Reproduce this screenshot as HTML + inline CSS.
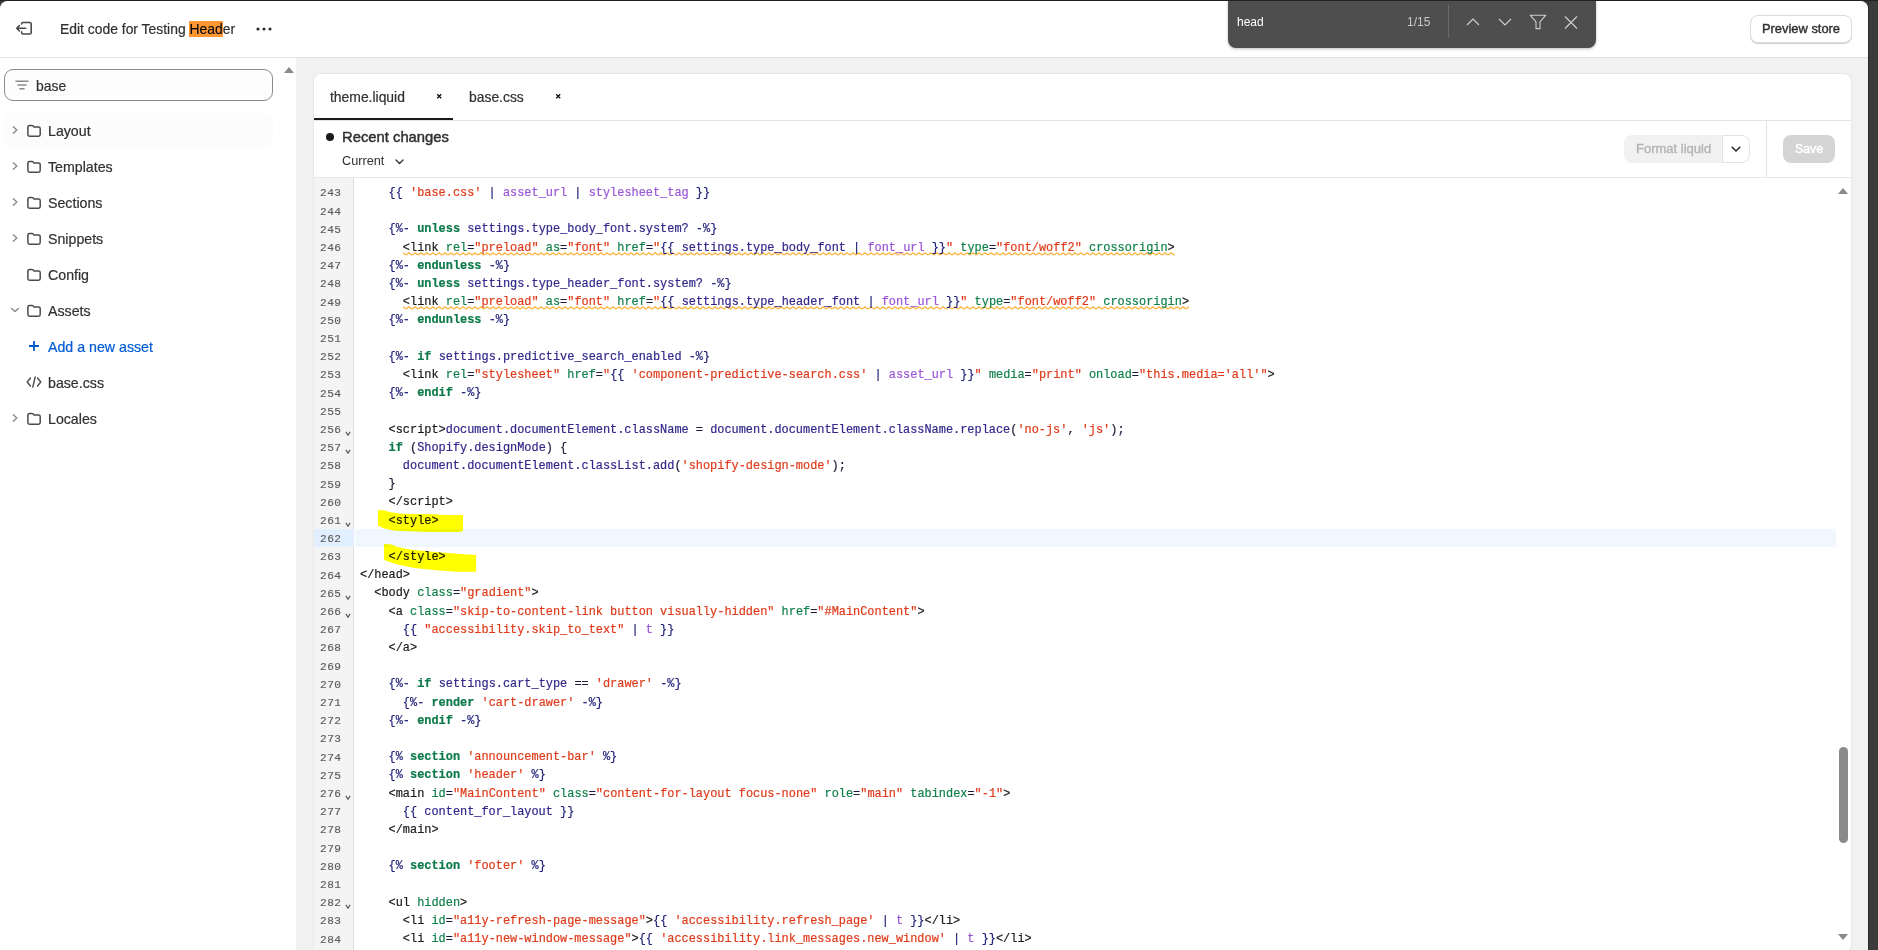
<!DOCTYPE html>
<html><head><meta charset="utf-8">
<style>
*{box-sizing:border-box;margin:0;padding:0}
html,body{width:1878px;height:950px;overflow:hidden}
body{background:#3b3b3b;position:relative;font-family:"Liberation Sans",sans-serif;color:#303030}
.topstrip{position:absolute;left:0;top:0;width:1878px;height:1px;background:#222}
.app{position:absolute;left:0;top:1px;width:1868px;height:949px;background:#f1f1f1;border-radius:8px 8px 0 0;overflow:hidden}
.rline{position:absolute;left:1868px;top:0;width:1px;height:950px;background:#2b2b2b}
.hdr{position:absolute;left:0;top:0;width:1868px;height:58px;background:#fff;border-bottom:1px solid #e3e3e3}
.side{position:absolute;left:0;top:58px;width:296px;height:892px;background:#fff}
.card{position:absolute;left:314px;top:74px;width:1537px;height:878px;background:#fff;border-radius:7px;overflow:hidden;box-shadow:0 0 0 1px #e8e8e8}
.abs{position:absolute}
.title{position:absolute;left:60px;top:20.1px;font-size:13.9px;line-height:18px;color:#303030;white-space:nowrap;-webkit-text-stroke:0.2px #303030}
.hl{background:#ff9632;color:#000}
.dots{position:absolute;left:256px;top:26px}
.preview{position:absolute;left:1750px;top:15px;width:102px;height:28px;border:1px solid #dcdcdc;border-radius:8px;box-shadow:0 1px 0 #d0d0d0;font-size:12.9px;font-weight:400;-webkit-text-stroke:0.4px #303030;line-height:26px;text-align:center;color:#303030;background:#fff;white-space:nowrap}
.find{position:absolute;left:1228px;top:0;width:368px;height:48px;background:#4e4e4e;border-radius:0 0 8px 8px;box-shadow:0 1px 3px rgba(0,0,0,.25)}
.search{position:absolute;left:4px;top:11px;width:269px;height:32px;border:1px solid #8a8a8a;border-radius:9px;background:#fdfdfd}
.row{position:absolute;left:4px;width:269px;height:32px;border-radius:8px}
.rtxt{position:absolute;left:44px;top:7px;font-size:14.2px;line-height:18px;color:#303030;white-space:nowrap;-webkit-text-stroke:0.2px currentColor}
.tab{position:absolute;font-size:13.9px;line-height:18px;color:#303030;white-space:nowrap;-webkit-text-stroke:0.2px #303030}
.gut{position:absolute;left:0;top:104px;width:40px;height:800px;background:#f4f4f4;border-right:1px solid #dedede}
.code{position:absolute;left:46px;top:104px;width:1491px;height:800px}
.ln{position:absolute;height:18px;line-height:18px;white-space:pre;font-family:"Liberation Mono",monospace;font-size:11.91px;color:#1f1f1f;-webkit-text-stroke:0.2px currentColor}
.gn{position:absolute;left:0;width:27.5px;text-align:right;height:18px;line-height:18px;font-family:"Liberation Mono",monospace;font-size:11.2px;letter-spacing:0.425px;color:#5c5c5c;padding-top:0.4px;-webkit-text-stroke:0.15px #5c5c5c}
.fold{position:absolute;left:31.3px;height:18px}
.fold svg{position:absolute;top:10.6px;left:0}
i{font-style:normal}
.p{color:#1e1e78}.k{color:#0c7a4a;font-weight:700}.v{color:#33288a}.s{color:#e03a1a}.f{color:#9a56d8}.t{color:#1a1a1a}.a{color:#0f7f4a}.o{color:#1c1c3c}.w{}
.sq{text-decoration:underline wavy #f6b445;text-decoration-thickness:1.4px;text-underline-offset:2px;text-decoration-skip-ink:none}
</style></head>
<body>
<div class="app"><div style="position:absolute;left:0;top:-1px;width:1868px;height:950px">
  <div class="hdr">
    <svg class="abs" style="left:15px;top:20px" width="18" height="16" viewBox="0 0 18 16">
      <path d="M6.6 4 V3.9 Q6.6 2.5 8 2.5 H14.6 Q16.2 2.5 16.2 4.1 V12.4 Q16.2 14 14.6 14 H8 Q6.6 14 6.6 12.6 V11.7" fill="none" stroke="#4a4a4a" stroke-width="1.6" stroke-linecap="round"/>
      <path d="M10.6 8.25 H1.8 M4.4 5.6 L1.7 8.25 L4.4 10.9" fill="none" stroke="#4a4a4a" stroke-width="1.6" stroke-linecap="round" stroke-linejoin="round"/>
    </svg>
    <div class="title">Edit code for Testing <span class="hl">Head</span>er</div>
    <svg class="dots" width="16" height="6" viewBox="0 0 16 6"><circle cx="2" cy="3" r="1.6" fill="#303030"/><circle cx="8" cy="3" r="1.6" fill="#303030"/><circle cx="14" cy="3" r="1.6" fill="#303030"/></svg>
    <div class="preview">Preview store</div>
  </div>
  <div class="side">
    <div class="search">
      <svg class="abs" style="left:10px;top:9.5px" width="14" height="10" viewBox="0 0 14 10"><path d="M1 1.2 H13 M3 5 H11 M5 8.8 H9" stroke="#8a8a8a" stroke-width="1.5" stroke-linecap="round"/></svg>
      <div class="abs" style="left:31px;top:7px;font-size:13.9px;line-height:18px;color:#303030;-webkit-text-stroke:0.2px #303030">base</div>
    </div>
    <svg class="abs" style="left:284px;top:9px" width="10" height="6" viewBox="0 0 10 6"><path d="M0 6 L5 0 L10 6Z" fill="#8a8a8a"/></svg>
    <div class="abs" style="left:0;top:57.30px;width:296px;height:32px"><div class="abs" style="left:4px;top:-2px;width:269px;height:34px;border-radius:8px;background:#fcfcfc"></div><svg class="abs" style="left:10px;top:10px" width="10" height="10" viewBox="0 0 10 10"><path d="M3.4 1.7 L6.8 5 L3.4 8.3" fill="none" stroke="#8a8a8a" stroke-width="1.4" stroke-linecap="round" stroke-linejoin="round"/></svg><svg class="abs" style="left:26px;top:9px" width="16" height="14" viewBox="0 0 16 14"><path d="M1.9 3 Q1.9 1.4 3.5 1.4 H5.8 Q6.6 1.4 7.2 2.1 L8 3 H12.6 Q14.2 3 14.2 4.6 V10.6 Q14.2 12.2 12.6 12.2 H3.5 Q1.9 12.2 1.9 10.6 Z" fill="none" stroke="#4a4a4a" stroke-width="1.5" stroke-linejoin="round"/></svg><div class="rtxt" style="left:48px;top:7px;color:#303030">Layout</div></div>
<div class="abs" style="left:0;top:93.30px;width:296px;height:32px"><svg class="abs" style="left:10px;top:10px" width="10" height="10" viewBox="0 0 10 10"><path d="M3.4 1.7 L6.8 5 L3.4 8.3" fill="none" stroke="#8a8a8a" stroke-width="1.4" stroke-linecap="round" stroke-linejoin="round"/></svg><svg class="abs" style="left:26px;top:9px" width="16" height="14" viewBox="0 0 16 14"><path d="M1.9 3 Q1.9 1.4 3.5 1.4 H5.8 Q6.6 1.4 7.2 2.1 L8 3 H12.6 Q14.2 3 14.2 4.6 V10.6 Q14.2 12.2 12.6 12.2 H3.5 Q1.9 12.2 1.9 10.6 Z" fill="none" stroke="#4a4a4a" stroke-width="1.5" stroke-linejoin="round"/></svg><div class="rtxt" style="left:48px;top:7px;color:#303030">Templates</div></div>
<div class="abs" style="left:0;top:129.30px;width:296px;height:32px"><svg class="abs" style="left:10px;top:10px" width="10" height="10" viewBox="0 0 10 10"><path d="M3.4 1.7 L6.8 5 L3.4 8.3" fill="none" stroke="#8a8a8a" stroke-width="1.4" stroke-linecap="round" stroke-linejoin="round"/></svg><svg class="abs" style="left:26px;top:9px" width="16" height="14" viewBox="0 0 16 14"><path d="M1.9 3 Q1.9 1.4 3.5 1.4 H5.8 Q6.6 1.4 7.2 2.1 L8 3 H12.6 Q14.2 3 14.2 4.6 V10.6 Q14.2 12.2 12.6 12.2 H3.5 Q1.9 12.2 1.9 10.6 Z" fill="none" stroke="#4a4a4a" stroke-width="1.5" stroke-linejoin="round"/></svg><div class="rtxt" style="left:48px;top:7px;color:#303030">Sections</div></div>
<div class="abs" style="left:0;top:165.30px;width:296px;height:32px"><svg class="abs" style="left:10px;top:10px" width="10" height="10" viewBox="0 0 10 10"><path d="M3.4 1.7 L6.8 5 L3.4 8.3" fill="none" stroke="#8a8a8a" stroke-width="1.4" stroke-linecap="round" stroke-linejoin="round"/></svg><svg class="abs" style="left:26px;top:9px" width="16" height="14" viewBox="0 0 16 14"><path d="M1.9 3 Q1.9 1.4 3.5 1.4 H5.8 Q6.6 1.4 7.2 2.1 L8 3 H12.6 Q14.2 3 14.2 4.6 V10.6 Q14.2 12.2 12.6 12.2 H3.5 Q1.9 12.2 1.9 10.6 Z" fill="none" stroke="#4a4a4a" stroke-width="1.5" stroke-linejoin="round"/></svg><div class="rtxt" style="left:48px;top:7px;color:#303030">Snippets</div></div>
<div class="abs" style="left:0;top:201.30px;width:296px;height:32px"><svg class="abs" style="left:26px;top:9px" width="16" height="14" viewBox="0 0 16 14"><path d="M1.9 3 Q1.9 1.4 3.5 1.4 H5.8 Q6.6 1.4 7.2 2.1 L8 3 H12.6 Q14.2 3 14.2 4.6 V10.6 Q14.2 12.2 12.6 12.2 H3.5 Q1.9 12.2 1.9 10.6 Z" fill="none" stroke="#4a4a4a" stroke-width="1.5" stroke-linejoin="round"/></svg><div class="rtxt" style="left:48px;top:7px;color:#303030">Config</div></div>
<div class="abs" style="left:0;top:237.30px;width:296px;height:32px"><svg class="abs" style="left:10px;top:10px" width="10" height="10" viewBox="0 0 10 10"><path d="M1.6 3.4 L5 6.6 L8.4 3.4" fill="none" stroke="#8a8a8a" stroke-width="1.4" stroke-linecap="round" stroke-linejoin="round"/></svg><svg class="abs" style="left:26px;top:9px" width="16" height="14" viewBox="0 0 16 14"><path d="M1.9 3 Q1.9 1.4 3.5 1.4 H5.8 Q6.6 1.4 7.2 2.1 L8 3 H12.6 Q14.2 3 14.2 4.6 V10.6 Q14.2 12.2 12.6 12.2 H3.5 Q1.9 12.2 1.9 10.6 Z" fill="none" stroke="#4a4a4a" stroke-width="1.5" stroke-linejoin="round"/></svg><div class="rtxt" style="left:48px;top:7px;color:#303030">Assets</div></div>
<div class="abs" style="left:0;top:273.30px;width:296px;height:32px"><svg class="abs" style="left:28.1px;top:8.7px" width="12" height="12" viewBox="0 0 12 12"><path d="M6 1 V11 M1 6 H11" stroke="#005bd3" stroke-width="1.8"/></svg><div class="rtxt" style="left:48px;top:7px;color:#005bd3">Add a new asset</div></div>
<div class="abs" style="left:0;top:309.30px;width:296px;height:32px"><svg class="abs" style="left:26px;top:9px" width="16" height="12" viewBox="0 0 16 12"><path d="M4.5 2 L1.2 6 L4.5 10 M11.5 2 L14.8 6 L11.5 10 M9.2 1 L6.8 11" fill="none" stroke="#4a4a4a" stroke-width="1.4" stroke-linecap="round" stroke-linejoin="round"/></svg><div class="rtxt" style="left:48px;top:7px;color:#303030">base.css</div></div>
<div class="abs" style="left:0;top:345.30px;width:296px;height:32px"><svg class="abs" style="left:10px;top:10px" width="10" height="10" viewBox="0 0 10 10"><path d="M3.4 1.7 L6.8 5 L3.4 8.3" fill="none" stroke="#8a8a8a" stroke-width="1.4" stroke-linecap="round" stroke-linejoin="round"/></svg><svg class="abs" style="left:26px;top:9px" width="16" height="14" viewBox="0 0 16 14"><path d="M1.9 3 Q1.9 1.4 3.5 1.4 H5.8 Q6.6 1.4 7.2 2.1 L8 3 H12.6 Q14.2 3 14.2 4.6 V10.6 Q14.2 12.2 12.6 12.2 H3.5 Q1.9 12.2 1.9 10.6 Z" fill="none" stroke="#4a4a4a" stroke-width="1.5" stroke-linejoin="round"/></svg><div class="rtxt" style="left:48px;top:7px;color:#303030">Locales</div></div>
  </div>
  <div class="card">
    <div class="tab" style="left:16px;top:14.2px">theme.liquid</div>
    <svg class="abs" style="left:121.8px;top:18.8px" width="7" height="7" viewBox="0 0 7 7"><path d="M1.2 1.2 L5.2 5.2 M5.2 1.2 L1.2 5.2" stroke="#111" stroke-width="1.35"/></svg>
    <div class="tab" style="left:155px;top:14.2px">base.css</div>
    <svg class="abs" style="left:240.8px;top:18.8px" width="7" height="7" viewBox="0 0 7 7"><path d="M1.2 1.2 L5.2 5.2 M5.2 1.2 L1.2 5.2" stroke="#111" stroke-width="1.35"/></svg>
    <div class="abs" style="left:0;top:44px;width:139px;height:2px;background:#1a1a1a"></div>
    <div class="abs" style="left:0;top:46px;width:1537px;height:1px;background:#e3e3e3"></div>
    <div class="abs" style="left:12px;top:59px;width:8px;height:8px;border-radius:50%;background:#1a1a1a"></div>
    <div class="abs" style="left:28px;top:53.8px;font-size:14.8px;line-height:18px;font-weight:400;-webkit-text-stroke:0.45px #303030;color:#303030;white-space:nowrap">Recent changes</div>
    <div class="abs" style="left:28px;top:79px;font-size:12.7px;line-height:16px;color:#303030">Current</div>
    <svg class="abs" style="left:81px;top:85px" width="9" height="6" viewBox="0 0 9 6"><path d="M1 1 L4.5 4.5 L8 1" fill="none" stroke="#303030" stroke-width="1.4" stroke-linecap="round" stroke-linejoin="round"/></svg>
    <div class="abs" style="left:1310px;top:61px;width:126px;height:28px;border-radius:8px;background:#f1f1f1;overflow:hidden">
      <div class="abs" style="left:12px;top:6px;font-size:13px;line-height:16px;color:#b3b3b3;-webkit-text-stroke:0.35px #b3b3b3;white-space:nowrap">Format liquid</div>
      <div class="abs" style="left:98px;top:0;width:28px;height:28px;background:#fff;border:1px solid #e3e3e3;border-radius:0 8px 8px 0"></div>
      <svg class="abs" style="left:107px;top:11px" width="10" height="7" viewBox="0 0 10 7"><path d="M1.2 1.2 L5 5 L8.8 1.2" fill="none" stroke="#303030" stroke-width="1.6" stroke-linecap="round" stroke-linejoin="round"/></svg>
    </div>
    <div class="abs" style="left:1452px;top:47px;width:1px;height:56px;background:#e3e3e3"></div>
    <div class="abs" style="left:1469px;top:61px;width:52px;height:28px;border-radius:8px;background:#d4d4d4;color:#fff;font-size:12.3px;font-weight:400;-webkit-text-stroke:0.45px #fff;line-height:28px;text-align:center">Save</div>
    <div class="abs" style="left:0;top:103px;width:1537px;height:1px;background:#e8e8e8"></div>
    <div class="gut"></div>
    <!-- highlight line 262 -->
    <div class="abs" id="hl262" style="left:0;top:455px;width:40px;height:18px;background:#e1efff"></div>
    <div class="abs" id="hl262b" style="left:41px;top:455px;width:1481px;height:18px;background:#f0f7ff"></div>
    <div class="abs" style="left:46.0px;top:0;width:1480px;height:900px" id="code"><div class="ln" style="top:110.00px;left:28.580px"><i class="p">{{ </i><i class="s">'base.css'</i><i class="p"> | </i><i class="f">asset_url</i><i class="p"> | </i><i class="f">stylesheet_tag</i><i class="p"> }}</i></div>
<div class="ln" style="top:128.20px;left:0.000px"></div>
<div class="ln" style="top:146.40px;left:28.580px"><i class="p">{%- </i><i class="k">unless</i><i class="w"> </i><i class="v">settings.type_body_font.system?</i><i class="p"> -%}</i></div>
<svg class="abs" style="left:42.870px;top:177.50px" width="771.7" height="4"><defs><pattern id="wv246" x="0" y="0" width="6" height="4" patternUnits="userSpaceOnUse"><path d="M-3 2.8 C-2 2.8 -1 1 0 1 C1 1 2 2.8 3 2.8 C4 2.8 5 1 6 1 C7 1 8 2.8 9 2.8" fill="none" stroke="#fdb543" stroke-width="1.3"/></pattern></defs><rect x="0" y="0" width="771.7" height="4" fill="url(#wv246)"/></svg>
<div class="ln" style="top:164.60px;left:42.870px"><i class="t">&lt;link </i><i class="a">rel</i><i class="o">=</i><i class="s">"preload"</i><i class="w"> </i><i class="a">as</i><i class="o">=</i><i class="s">"font"</i><i class="w"> </i><i class="a">href</i><i class="o">=</i><i class="s">"</i><i class="p">{{ </i><i class="v">settings.type_body_font</i><i class="p"> | </i><i class="f">font_url</i><i class="p"> }}</i><i class="s">"</i><i class="w"> </i><i class="a">type</i><i class="o">=</i><i class="s">"font/woff2"</i><i class="w"> </i><i class="a">crossorigin</i><i class="t">&gt;</i></div>
<div class="ln" style="top:182.80px;left:28.580px"><i class="p">{%- </i><i class="k">endunless</i><i class="p"> -%}</i></div>
<div class="ln" style="top:201.00px;left:28.580px"><i class="p">{%- </i><i class="k">unless</i><i class="w"> </i><i class="v">settings.type_header_font.system?</i><i class="p"> -%}</i></div>
<svg class="abs" style="left:42.870px;top:232.10px" width="785.9" height="4"><defs><pattern id="wv249" x="0" y="0" width="6" height="4" patternUnits="userSpaceOnUse"><path d="M-3 2.8 C-2 2.8 -1 1 0 1 C1 1 2 2.8 3 2.8 C4 2.8 5 1 6 1 C7 1 8 2.8 9 2.8" fill="none" stroke="#fdb543" stroke-width="1.3"/></pattern></defs><rect x="0" y="0" width="785.9" height="4" fill="url(#wv249)"/></svg>
<div class="ln" style="top:219.20px;left:42.870px"><i class="t">&lt;link </i><i class="a">rel</i><i class="o">=</i><i class="s">"preload"</i><i class="w"> </i><i class="a">as</i><i class="o">=</i><i class="s">"font"</i><i class="w"> </i><i class="a">href</i><i class="o">=</i><i class="s">"</i><i class="p">{{ </i><i class="v">settings.type_header_font</i><i class="p"> | </i><i class="f">font_url</i><i class="p"> }}</i><i class="s">"</i><i class="w"> </i><i class="a">type</i><i class="o">=</i><i class="s">"font/woff2"</i><i class="w"> </i><i class="a">crossorigin</i><i class="t">&gt;</i></div>
<div class="ln" style="top:237.40px;left:28.580px"><i class="p">{%- </i><i class="k">endunless</i><i class="p"> -%}</i></div>
<div class="ln" style="top:255.60px;left:0.000px"></div>
<div class="ln" style="top:273.80px;left:28.580px"><i class="p">{%- </i><i class="k">if</i><i class="w"> </i><i class="v">settings.predictive_search_enabled</i><i class="p"> -%}</i></div>
<div class="ln" style="top:292.00px;left:42.870px"><i class="t">&lt;link </i><i class="a">rel</i><i class="o">=</i><i class="s">"stylesheet"</i><i class="w"> </i><i class="a">href</i><i class="o">=</i><i class="s">"</i><i class="p">{{ </i><i class="s">'component-predictive-search.css'</i><i class="p"> | </i><i class="f">asset_url</i><i class="p"> }}</i><i class="s">"</i><i class="w"> </i><i class="a">media</i><i class="o">=</i><i class="s">"print"</i><i class="w"> </i><i class="a">onload</i><i class="o">=</i><i class="s">"this.media='all'"</i><i class="t">&gt;</i></div>
<div class="ln" style="top:310.20px;left:28.580px"><i class="p">{%- </i><i class="k">endif</i><i class="p"> -%}</i></div>
<div class="ln" style="top:328.40px;left:0.000px"></div>
<div class="ln" style="top:346.60px;left:28.580px"><i class="t">&lt;script&gt;</i><i class="v">document.documentElement.className</i><i class="o"> = </i><i class="v">document.documentElement.className.replace</i><i class="o">(</i><i class="s">'no-js'</i><i class="o">, </i><i class="s">'js'</i><i class="o">);</i></div>
<div class="ln" style="top:364.80px;left:28.580px"><i class="k">if</i><i class="o"> (</i><i class="v">Shopify.designMode</i><i class="o">) {</i></div>
<div class="ln" style="top:383.00px;left:42.870px"><i class="v">document.documentElement.classList.add</i><i class="o">(</i><i class="s">'shopify-design-mode'</i><i class="o">);</i></div>
<div class="ln" style="top:401.20px;left:28.580px"><i class="o">}</i></div>
<div class="ln" style="top:419.40px;left:28.580px"><i class="t">&lt;/script&gt;</i></div>
<div class="ln" style="top:437.60px;left:28.580px"><i class="t">&lt;style&gt;</i></div>
<div class="ln" style="top:455.80px;left:0.000px"></div>
<div class="ln" style="top:474.00px;left:28.580px"><i class="t">&lt;/style&gt;</i></div>
<div class="ln" style="top:492.20px;left:0.000px"><i class="t">&lt;/head&gt;</i></div>
<div class="ln" style="top:510.40px;left:14.290px"><i class="t">&lt;body </i><i class="a">class</i><i class="o">=</i><i class="s">"gradient"</i><i class="t">&gt;</i></div>
<div class="ln" style="top:528.60px;left:28.580px"><i class="t">&lt;a </i><i class="a">class</i><i class="o">=</i><i class="s">"skip-to-content-link button visually-hidden"</i><i class="w"> </i><i class="a">href</i><i class="o">=</i><i class="s">"#MainContent"</i><i class="t">&gt;</i></div>
<div class="ln" style="top:546.80px;left:42.870px"><i class="p">{{ </i><i class="s">"accessibility.skip_to_text"</i><i class="p"> | </i><i class="f">t</i><i class="p"> }}</i></div>
<div class="ln" style="top:565.00px;left:28.580px"><i class="t">&lt;/a&gt;</i></div>
<div class="ln" style="top:583.20px;left:0.000px"></div>
<div class="ln" style="top:601.40px;left:28.580px"><i class="p">{%- </i><i class="k">if</i><i class="w"> </i><i class="v">settings.cart_type</i><i class="o"> == </i><i class="s">'drawer'</i><i class="p"> -%}</i></div>
<div class="ln" style="top:619.60px;left:42.870px"><i class="p">{%- </i><i class="k">render</i><i class="w"> </i><i class="s">'cart-drawer'</i><i class="p"> -%}</i></div>
<div class="ln" style="top:637.80px;left:28.580px"><i class="p">{%- </i><i class="k">endif</i><i class="p"> -%}</i></div>
<div class="ln" style="top:656.00px;left:0.000px"></div>
<div class="ln" style="top:674.20px;left:28.580px"><i class="p">{% </i><i class="k">section</i><i class="w"> </i><i class="s">'announcement-bar'</i><i class="p"> %}</i></div>
<div class="ln" style="top:692.40px;left:28.580px"><i class="p">{% </i><i class="k">section</i><i class="w"> </i><i class="s">'header'</i><i class="p"> %}</i></div>
<div class="ln" style="top:710.60px;left:28.580px"><i class="t">&lt;main </i><i class="a">id</i><i class="o">=</i><i class="s">"MainContent"</i><i class="w"> </i><i class="a">class</i><i class="o">=</i><i class="s">"content-for-layout focus-none"</i><i class="w"> </i><i class="a">role</i><i class="o">=</i><i class="s">"main"</i><i class="w"> </i><i class="a">tabindex</i><i class="o">=</i><i class="s">"-1"</i><i class="t">&gt;</i></div>
<div class="ln" style="top:728.80px;left:42.870px"><i class="p">{{ </i><i class="v">content_for_layout</i><i class="p"> }}</i></div>
<div class="ln" style="top:747.00px;left:28.580px"><i class="t">&lt;/main&gt;</i></div>
<div class="ln" style="top:765.20px;left:0.000px"></div>
<div class="ln" style="top:783.40px;left:28.580px"><i class="p">{% </i><i class="k">section</i><i class="w"> </i><i class="s">'footer'</i><i class="p"> %}</i></div>
<div class="ln" style="top:801.60px;left:0.000px"></div>
<div class="ln" style="top:819.80px;left:28.580px"><i class="t">&lt;ul </i><i class="a">hidden</i><i class="t">&gt;</i></div>
<div class="ln" style="top:838.00px;left:42.870px"><i class="t">&lt;li </i><i class="a">id</i><i class="o">=</i><i class="s">"a11y-refresh-page-message"</i><i class="t">&gt;</i><i class="p">{{ </i><i class="s">'accessibility.refresh_page'</i><i class="p"> | </i><i class="f">t</i><i class="p"> }}</i><i class="t">&lt;/li&gt;</i></div>
<div class="ln" style="top:856.20px;left:42.870px"><i class="t">&lt;li </i><i class="a">id</i><i class="o">=</i><i class="s">"a11y-new-window-message"</i><i class="t">&gt;</i><i class="p">{{ </i><i class="s">'accessibility.link_messages.new_window'</i><i class="p"> | </i><i class="f">t</i><i class="p"> }}</i><i class="t">&lt;/li&gt;</i></div></div>
    <div class="abs" style="left:0;top:0;width:39px;height:900px" id="gutnums"><div class="gn" style="top:110.00px">243</div>
<div class="gn" style="top:128.20px">244</div>
<div class="gn" style="top:146.40px">245</div>
<div class="gn" style="top:164.60px">246</div>
<div class="gn" style="top:182.80px">247</div>
<div class="gn" style="top:201.00px">248</div>
<div class="gn" style="top:219.20px">249</div>
<div class="gn" style="top:237.40px">250</div>
<div class="gn" style="top:255.60px">251</div>
<div class="gn" style="top:273.80px">252</div>
<div class="gn" style="top:292.00px">253</div>
<div class="gn" style="top:310.20px">254</div>
<div class="gn" style="top:328.40px">255</div>
<div class="gn" style="top:346.60px">256</div>
<div class="fold" style="top:346.60px"><svg width="6" height="5" viewBox="0 0 6 5"><path d="M0.9 0.9 L3 4.2 L5.1 0.9" fill="none" stroke="#555" stroke-width="1.15"/></svg></div>
<div class="gn" style="top:364.80px">257</div>
<div class="fold" style="top:364.80px"><svg width="6" height="5" viewBox="0 0 6 5"><path d="M0.9 0.9 L3 4.2 L5.1 0.9" fill="none" stroke="#555" stroke-width="1.15"/></svg></div>
<div class="gn" style="top:383.00px">258</div>
<div class="gn" style="top:401.20px">259</div>
<div class="gn" style="top:419.40px">260</div>
<div class="gn" style="top:437.60px">261</div>
<div class="fold" style="top:437.60px"><svg width="6" height="5" viewBox="0 0 6 5"><path d="M0.9 0.9 L3 4.2 L5.1 0.9" fill="none" stroke="#555" stroke-width="1.15"/></svg></div>
<div class="gn" style="top:455.80px">262</div>
<div class="gn" style="top:474.00px">263</div>
<div class="gn" style="top:492.20px">264</div>
<div class="gn" style="top:510.40px">265</div>
<div class="fold" style="top:510.40px"><svg width="6" height="5" viewBox="0 0 6 5"><path d="M0.9 0.9 L3 4.2 L5.1 0.9" fill="none" stroke="#555" stroke-width="1.15"/></svg></div>
<div class="gn" style="top:528.60px">266</div>
<div class="fold" style="top:528.60px"><svg width="6" height="5" viewBox="0 0 6 5"><path d="M0.9 0.9 L3 4.2 L5.1 0.9" fill="none" stroke="#555" stroke-width="1.15"/></svg></div>
<div class="gn" style="top:546.80px">267</div>
<div class="gn" style="top:565.00px">268</div>
<div class="gn" style="top:583.20px">269</div>
<div class="gn" style="top:601.40px">270</div>
<div class="gn" style="top:619.60px">271</div>
<div class="gn" style="top:637.80px">272</div>
<div class="gn" style="top:656.00px">273</div>
<div class="gn" style="top:674.20px">274</div>
<div class="gn" style="top:692.40px">275</div>
<div class="gn" style="top:710.60px">276</div>
<div class="fold" style="top:710.60px"><svg width="6" height="5" viewBox="0 0 6 5"><path d="M0.9 0.9 L3 4.2 L5.1 0.9" fill="none" stroke="#555" stroke-width="1.15"/></svg></div>
<div class="gn" style="top:728.80px">277</div>
<div class="gn" style="top:747.00px">278</div>
<div class="gn" style="top:765.20px">279</div>
<div class="gn" style="top:783.40px">280</div>
<div class="gn" style="top:801.60px">281</div>
<div class="gn" style="top:819.80px">282</div>
<div class="fold" style="top:819.80px"><svg width="6" height="5" viewBox="0 0 6 5"><path d="M0.9 0.9 L3 4.2 L5.1 0.9" fill="none" stroke="#555" stroke-width="1.15"/></svg></div>
<div class="gn" style="top:838.00px">283</div>
<div class="gn" style="top:856.20px">284</div></div>
    <svg class="abs" style="left:1524px;top:114px" width="10" height="6" viewBox="0 0 10 6"><path d="M0 6 L5 0 L10 6Z" fill="#8a8a8a"/></svg>
    <div class="abs" style="left:1525px;top:673px;width:9px;height:96px;border-radius:5px;background:#8a8a8a"></div>
    <svg class="abs" style="left:1524px;top:860px" width="10" height="6" viewBox="0 0 10 6"><path d="M0 0 L5 6 L10 0Z" fill="#8a8a8a"/></svg>
  </div>
  <div class="find">
    <div class="abs" style="left:9px;top:14px;font-size:12px;line-height:16px;color:#fff">head</div>
    <div class="abs" style="left:179px;top:14px;font-size:12px;line-height:16px;color:#c8c8c8">1/15</div>
    <div class="abs" style="left:220px;top:5px;width:1px;height:33px;background:#6a6a6a"></div>
    <svg class="abs" style="left:238px;top:17px" width="14" height="9" viewBox="0 0 14 9"><path d="M1 8 L7 2 L13 8" fill="none" stroke="#d0d0d0" stroke-width="1.1"/></svg>
    <svg class="abs" style="left:270px;top:18px" width="14" height="9" viewBox="0 0 14 9"><path d="M1 1 L7 7 L13 1" fill="none" stroke="#d0d0d0" stroke-width="1.1"/></svg>
    <svg class="abs" style="left:301px;top:14px" width="18" height="16" viewBox="0 0 18 16"><path d="M1.2 1.2 H16.8 L11 7.8 V14.6 H7 V7.8 Z" fill="none" stroke="#d0d0d0" stroke-width="1.1" stroke-linejoin="round"/></svg>
    <svg class="abs" style="left:336px;top:16px" width="14" height="13" viewBox="0 0 14 13"><path d="M1 0.5 L13 12.5 M13 0.5 L1 12.5" fill="none" stroke="#d0d0d0" stroke-width="1.1"/></svg>
  </div>
</div></div>
<svg class="abs" style="left:0;top:0;mix-blend-mode:multiply;pointer-events:none" width="1878" height="950" viewBox="0 0 1878 950">
<path d="M377.96 510.16 L384 510.16 L389.2 512 L400.2 513.8 L432.6 514.2 L443.7 514.9 L463 514.9 L463 530.8 L459.2 531.9 L428.2 531.9 L395.1 530.8 L384 528.6 L377.96 525.6 Z" fill="#ffff00"/>
<path d="M384 544.05 L391.7 544.4 L395.8 546.6 L408.3 549.2 L429 551.4 L460.6 554 L476.1 555.1 L476.1 571.7 L455.8 571.7 L436.3 570.2 L414.2 568 L395.8 564 L384 559.9 Z" fill="#ffff00"/>
</svg>
<div class="topstrip"></div>
<div class="rline"></div>
</body></html>
